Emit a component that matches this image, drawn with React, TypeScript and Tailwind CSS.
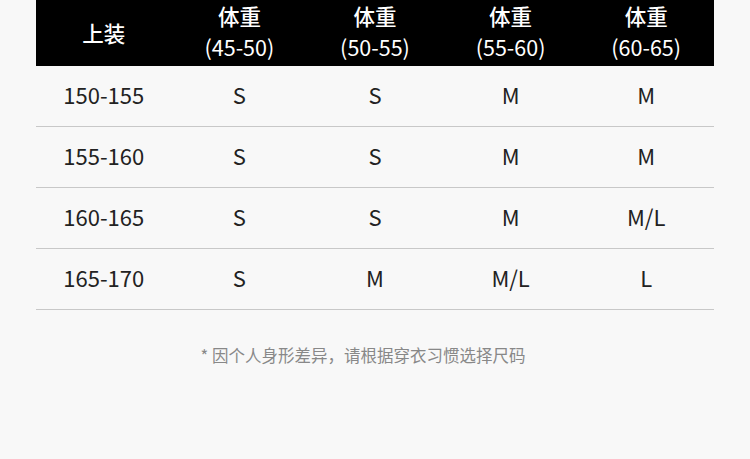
import React from 'react';

const headers = ['45-50', '50-55', '55-60', '60-65'];

const rows: { height: string; sizes: string[] }[] = [
  { height: '150-155', sizes: ['S', 'S', 'M', 'M'] },
  { height: '155-160', sizes: ['S', 'S', 'M', 'M'] },
  { height: '160-165', sizes: ['S', 'S', 'M', 'M/L'] },
  { height: '165-170', sizes: ['S', 'M', 'M/L', 'L'] },
];

const App: React.FC = () => {
  return (
    <div
      className="w-[750px] h-[459px] bg-[#f8f8f8] px-9 overflow-hidden"
      style={{ fontFamily: '"Noto Sans CJK SC", "Noto Sans", sans-serif' }}
    >
      {/* Header */}
      <div className="grid grid-cols-5 bg-black text-white h-[66px] items-center">
        <div className="text-center text-[21.5px] font-medium">上装</div>
        {headers.map((h) => (
          <div key={h} className="flex flex-col items-center text-[21.5px] leading-[31px] pb-[5px]">
            <span className="font-medium">体重</span>
            <span>({h})</span>
          </div>
        ))}
      </div>

      {/* Rows */}
      {rows.map((row) => (
        <div
          key={row.height}
          className="grid grid-cols-5 h-[61px] items-center border-b border-[#c8c8c8] text-[#222] text-[22px] pb-1"
        >
          <div className="text-center">{row.height}</div>
          {row.sizes.map((s, i) => (
            <div key={i} className="text-center">
              {s}
            </div>
          ))}
        </div>
      ))}

      <p className="mt-[33px] text-center text-[16.5px] text-[#888] pr-6">
        * 因个人身形差异，请根据穿衣习惯选择尺码
      </p>
    </div>
  );
};

export default App;
